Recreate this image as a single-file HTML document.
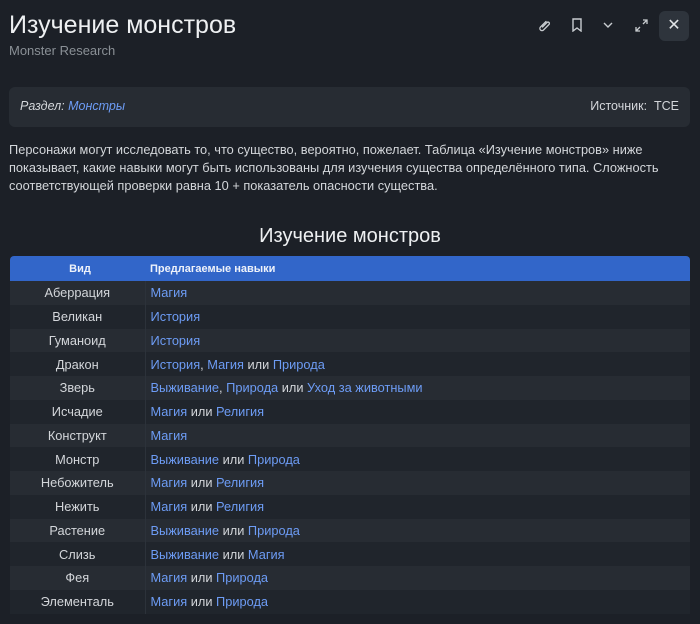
<!DOCTYPE html><html><head><meta charset="utf-8"><style>
body{margin:0;width:700px;height:624px;overflow:hidden;background:#1c2027;font-family:"Liberation Sans","DejaVu Sans",sans-serif;color:#d3d6da;position:relative}
h1{position:absolute;left:9px;top:11px;margin:0;font-weight:normal;font-size:25px;color:#eef0f2}
.sub{position:absolute;left:9px;top:43px;font-size:13px;color:#8a9096}
.close{position:absolute;left:659px;top:11px;width:30px;height:30px;border-radius:6px;background:#2e343c;color:#e0e3e6;text-align:center;line-height:30px;font-size:16px}
.box{position:absolute;left:9px;top:87px;width:681px;height:40px;background:#272c33;border-radius:6px;font-size:12.5px}
a{color:#6d9cf5;text-decoration:none}
p{position:absolute;left:9px;top:141px;margin:0;width:685px;font-size:12.8px;line-height:18px;color:#d3d6da}
h2{position:absolute;left:0;width:700px;text-align:center;top:225px;margin:0;font-weight:normal;font-size:20px;color:#eef0f2}
table{position:absolute;left:10px;top:256px;width:680px;border-collapse:collapse;font-size:12.8px}
th{background:#3266c9;color:#eef2fa;font-size:11px;height:25px;text-align:left;padding:0 0 0 5px}
th:first-child{text-align:center;border-radius:4px 0 0 0;width:130px}
th:last-child{border-radius:0 4px 0 0}
td{height:23.75px;padding:0 0 0 5px;box-sizing:border-box}
td:first-child{text-align:center;border-right:1px solid #2c323a;padding:0}
tr:nth-child(odd) td{background:#20252c}
tr:nth-child(even) td{background:#272c33}
</style></head><body>
<h1>Изучение монстров</h1>
<div class="sub">Monster Research</div>
<svg style="position:absolute;left:538px;top:19px" width="14" height="14" viewBox="0 0 14 14"><path d="M8 2.5l-5.5 5.5a2 2 0 0 0 3 3L11 5.5a1.4 1.4 0 0 0-2-2L4.5 8" fill="none" stroke="#c8ccd0" stroke-width="1.3" stroke-linecap="round"/></svg>
<svg style="position:absolute;left:571px;top:18px" width="12" height="14" viewBox="0 0 12 14"><path d="M2 1h8v12l-4-3-4 3z" fill="none" stroke="#c8ccd0" stroke-width="1.4"/></svg>
<svg style="position:absolute;left:602px;top:21px" width="12" height="8"><path d="M2 2l4 4 4-4" fill="none" stroke="#c8ccd0" stroke-width="1.4"/></svg>
<svg style="position:absolute;left:635px;top:19px" width="13" height="13"><path d="M8 1h4v4M12 1L8 5M5 12H1V8M1 12l4-4" fill="none" stroke="#c8ccd0" stroke-width="1.3"/></svg>
<div class="close">✕</div>
<div class="box"><span style="position:absolute;left:11px;top:12px;font-style:italic">Раздел: <a>Монстры</a></span><span style="position:absolute;right:11px;top:12px">Источник:&nbsp; TCE</span></div>
<p>Персонажи могут исследовать то, что существо, вероятно, пожелает. Таблица «Изучение монстров» ниже показывает, какие навыки могут быть использованы для изучения существа определённого типа. Сложность соответствующей проверки равна 10 + показатель опасности существа.</p>
<h2>Изучение монстров</h2>
<table>
<tr><th>Вид</th><th>Предлагаемые навыки</th></tr>
<tr><td>Аберрация</td><td><a>Магия</a></td></tr>
<tr><td>Великан</td><td><a>История</a></td></tr>
<tr><td>Гуманоид</td><td><a>История</a></td></tr>
<tr><td>Дракон</td><td><a>История</a>, <a>Магия</a> или <a>Природа</a></td></tr>
<tr><td>Зверь</td><td><a>Выживание</a>, <a>Природа</a> или <a>Уход за животными</a></td></tr>
<tr><td>Исчадие</td><td><a>Магия</a> или <a>Религия</a></td></tr>
<tr><td>Конструкт</td><td><a>Магия</a></td></tr>
<tr><td>Монстр</td><td><a>Выживание</a> или <a>Природа</a></td></tr>
<tr><td>Небожитель</td><td><a>Магия</a> или <a>Религия</a></td></tr>
<tr><td>Нежить</td><td><a>Магия</a> или <a>Религия</a></td></tr>
<tr><td>Растение</td><td><a>Выживание</a> или <a>Природа</a></td></tr>
<tr><td>Слизь</td><td><a>Выживание</a> или <a>Магия</a></td></tr>
<tr><td>Фея</td><td><a>Магия</a> или <a>Природа</a></td></tr>
<tr><td>Элементаль</td><td><a>Магия</a> или <a>Природа</a></td></tr>
</table>
</body></html>
